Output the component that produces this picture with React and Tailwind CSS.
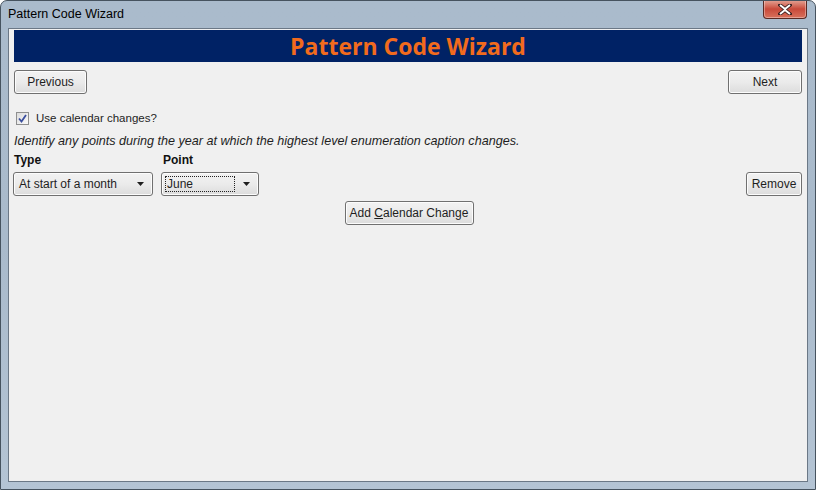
import { useState } from "react";

const btn =
  "h-[24px] rounded-[3px] border border-[#707070] bg-gradient-to-b from-[#f2f2f2] via-[#ebebeb] to-[#dcdcdc] text-[12px] text-[#1e1e1e] shadow-[inset_0_0_0_1px_#fcfcfc]";

function Dropdown({ value, width, focused }) {
  return (
    <div className={`${btn} ${width} flex items-center pl-[3px] pr-[8px]`}>
      <span
        className={`flex-1 h-[16px] leading-[15px] px-[1px] ${
          focused ? "border border-dotted border-[#222]" : "border border-transparent"
        }`}
      >
        {value}
      </span>
      <svg width="7" height="4" viewBox="0 0 7 4" className="ml-[8px]">
        <path d="M0 0h7L3.5 4z" fill="#1e1e1e" />
      </svg>
    </div>
  );
}

export default function App() {
  const [useCalendar, setUseCalendar] = useState(true);

  return (
    <div
      className="w-[816px] h-[490px] flex flex-col rounded-t-[7px] border border-[#46535f] bg-gradient-to-b from-[#aabbcc] via-[#a9bacb] to-[#b4c4d4] overflow-hidden"
      style={{ fontFamily: '"Liberation Sans", Arial, sans-serif' }}
    >
      {/* Title bar */}
      <div className="h-[27px] flex items-start justify-between pl-[7px] pr-[8px]">
        <span className="mt-[7px] text-[12.5px] text-black leading-none">Pattern Code Wizard</span>
        <button className="w-[44px] h-[19px] -mt-[1px] rounded-b-[4px] border border-t-0 border-[#5a2a24] bg-gradient-to-b from-[#e3a497] via-[#c8493a] to-[#d8705b] flex items-center justify-center shadow-[inset_0_0_0_1px_rgba(255,255,255,0.35)]">
          <svg width="14" height="11" viewBox="0 0 14 11">
            <path
              d="M2 1l5 4 5-4M2 10l5-4 5 4"
              stroke="#3a2020"
              strokeWidth="3.6"
              fill="none"
              strokeLinecap="square"
            />
            <path d="M2 1l5 4 5-4M2 10l5-4 5 4" stroke="#fff" strokeWidth="2" fill="none" />
          </svg>
        </button>
      </div>

      {/* Client area */}
      <div className="flex-1 mx-[7px] mb-[7px] border border-[#6b7886] bg-[#f0f0f0] px-[5px] pt-[1px] flex flex-col">
        <div className="h-[32px] bg-[#002265] flex items-center justify-center">
          <span
            className="text-[23px] font-bold text-[#f26b1d] leading-none"
            style={{ fontFamily: '"Open Sans", "Noto Sans", sans-serif' }}
          >
            Pattern Code Wizard
          </span>
        </div>

        <div className="flex justify-between mt-[8px]">
          <button className={`${btn} w-[73px]`}>Previous</button>
          <button className={`${btn} w-[74px]`}>Next</button>
        </div>

        <label className="flex items-center mt-[16px] ml-[2px] gap-[7px] text-[11.5px] text-[#1e1e1e]">
          <span
            onClick={() => setUseCalendar(!useCalendar)}
            className="w-[13px] h-[13px] border border-[#8e8f8f] bg-gradient-to-br from-[#dcdcdc] to-[#fafafa] flex items-center justify-center"
          >
            {useCalendar && (
              <svg width="9" height="9" viewBox="0 0 9 9">
                <path d="M1 4.5l2.5 3L8 1" stroke="#3b4f9e" strokeWidth="1.8" fill="none" />
              </svg>
            )}
          </span>
          Use calendar changes?
        </label>

        <p className="mt-[6px] text-[12.6px] italic text-[#1e1e1e] leading-[16px]">
          Identify any points during the year at which the highest level enumeration caption changes.
        </p>

        <div className="flex mt-[2px] text-[12px] font-bold text-[#111]">
          <span className="w-[149px]">Type</span>
          <span>Point</span>
        </div>

        <div className="flex items-center mt-[3px]">
          <div className="-ml-[1px]">
            <Dropdown value="At start of a month" width="w-[140px]" />
          </div>
          <div className="ml-[8px]">
            <Dropdown value="June" width="w-[98px]" focused />
          </div>
          <button className={`${btn} w-[56px] ml-auto -mt-[1px]`}>Remove</button>
        </div>

        <div className="flex justify-center mt-[5px]">
          <button className={`${btn} w-[129px] ml-[2px]`}>
            Add <span className="underline">C</span>alendar Change
          </button>
        </div>
      </div>
    </div>
  );
}
